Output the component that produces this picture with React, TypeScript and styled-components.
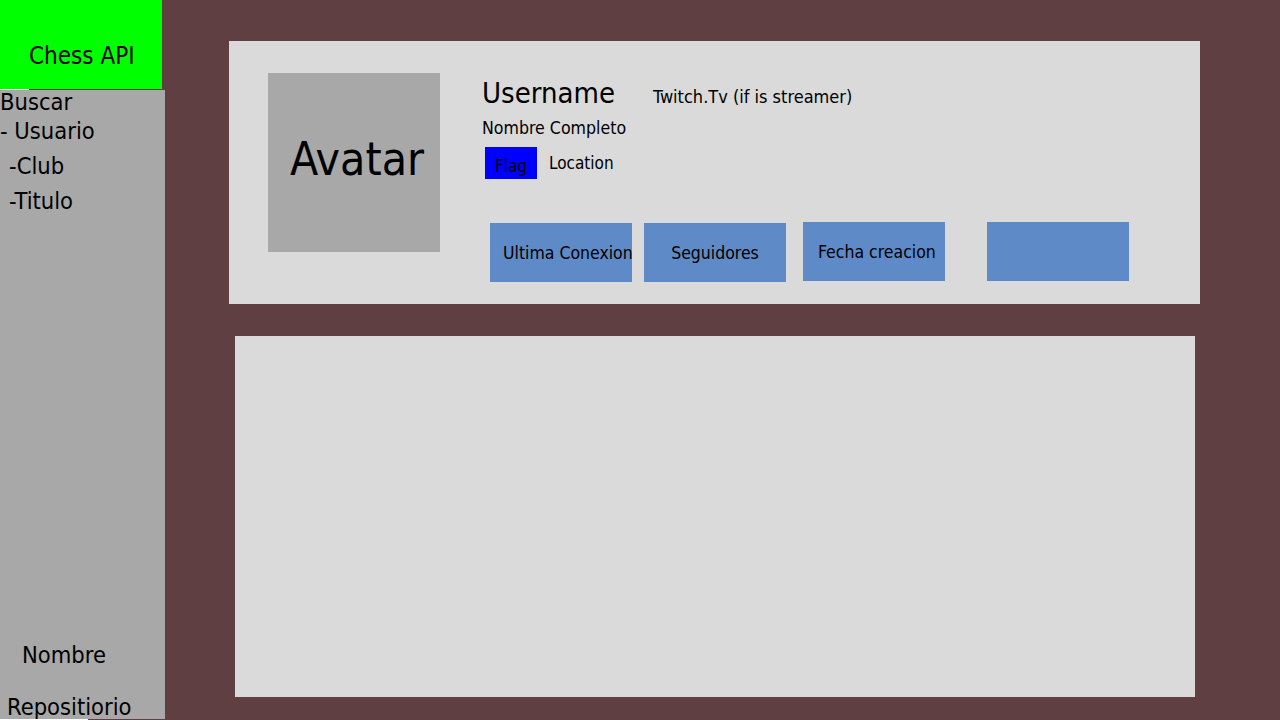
import React from 'react';
import styled, { createGlobalStyle } from 'styled-components';

const GlobalStyle = createGlobalStyle`
  html, body {
    margin: 0;
    padding: 0;
    background: #5f3f42;
    font-family: "DejaVu Sans Condensed", "DejaVu Sans", sans-serif;
    color: #000;
  }
  #root {
    height: 720px;
    overflow: hidden;
  }
`;

const Page = styled.div`
  display: flex;
  height: 720px;
  width: 1280px;
  background: #5f3f42;
`;

const Side = styled.aside`
  display: flex;
  flex-direction: column;
  width: 165px;
  flex-shrink: 0;
`;

const Brand = styled.div`
  width: 162px;
  height: 89px;
  background: #00ff00;
  font-size: 24px;
  line-height: 24px;
  padding: 44px 0 0 29px;
  box-sizing: border-box;
  white-space: nowrap;
`;

const Seam = styled.div<{ $width: number }>`
  height: 1px;
  width: ${(p) => p.$width}px;
  background: #ffffff;
  flex-shrink: 0;
`;

const SideNav = styled.nav`
  flex: 1;
  display: flex;
  flex-direction: column;
  background: #a8a8a8;
  font-size: 23.5px;
  overflow: hidden;
`;

const NavItem = styled.div<{ $indent?: number; $top?: number }>`
  padding-left: ${(p) => p.$indent ?? 0}px;
  margin-top: ${(p) => p.$top ?? 0}px;
  line-height: 24px;
  white-space: nowrap;
  flex-shrink: 0;
`;

const Spacer = styled.div`
  flex: 1;
`;

const Main = styled.main`
  flex: 1;
  display: flex;
  flex-direction: column;
`;

const ProfileCard = styled.section`
  margin: 41px 0 0 64px;
  width: 971px;
  height: 263px;
  box-sizing: border-box;
  background: #dadada;
  padding: 32px 0 0 39px;
  display: flex;
  gap: 42px;
`;

const Avatar = styled.div`
  width: 172px;
  height: 179px;
  background: #a8a8a8;
  display: flex;
  align-items: center;
  justify-content: center;
  font-size: 46px;
  padding: 0 0 8px 6px;
  box-sizing: border-box;
`;

const Info = styled.div`
  display: flex;
  flex-direction: column;
`;

const NameRow = styled.div`
  display: flex;
  align-items: baseline;
  gap: 38px;
  margin-top: 2px;
`;

const Username = styled.h1`
  margin: 0;
  font-weight: normal;
  font-size: 29px;
  line-height: 36px;
`;

const Twitch = styled.span`
  font-size: 18px;
`;

const Line = styled.div`
  font-size: 17.6px;
  line-height: 24px;
  margin-top: 5px;
`;

const LocationRow = styled.div`
  display: flex;
  align-items: center;
  gap: 12px;
  margin: 7px 0 0 3px;
  font-size: 17px;
`;

const Flag = styled.div`
  width: 52px;
  height: 32px;
  background: #0000ff;
  display: flex;
  align-items: flex-end;
  justify-content: center;
  padding-bottom: 3px;
  box-sizing: border-box;
`;

const Stats = styled.div`
  display: flex;
  align-items: flex-start;
  margin: 44px 0 0 8px;
`;

const Stat = styled.div<{ $gap: number; $up?: boolean; $pad?: number }>`
  width: 142px;
  height: 59px;
  margin-left: ${(p) => p.$gap}px;
  margin-top: ${(p) => (p.$up ? -1 : 0)}px;
  background: #5e8ac7;
  display: flex;
  align-items: center;
  justify-content: ${(p) => (p.$pad !== undefined ? 'flex-start' : 'center')};
  padding-left: ${(p) => p.$pad ?? 0}px;
  box-sizing: border-box;
  font-size: 17.5px;
  white-space: nowrap;
  overflow: hidden;
`;

const ContentCard = styled.section`
  margin: 32px 0 0 70px;
  width: 960px;
  height: 361px;
  background: #dadada;
`;

export default function App() {
  return (
    <>
      <GlobalStyle />
      <Page>
        <Side>
          <Brand>Chess API</Brand>
          <Seam $width={29} />
          <SideNav>
            <NavItem $top={0}>Buscar</NavItem>
            <NavItem $top={5}>- Usuario</NavItem>
            <NavItem $indent={9} $top={11}>-Club</NavItem>
            <NavItem $indent={9} $top={11}>-Titulo</NavItem>
            <Spacer />
            <NavItem $indent={22}>Nombre</NavItem>
            <NavItem $indent={7} $top={28}>Repositiorio</NavItem>
          </SideNav>
          <Seam $width={88} />
        </Side>
        <Main>
          <ProfileCard>
            <Avatar>Avatar</Avatar>
            <Info>
              <NameRow>
                <Username>Username</Username>
                <Twitch>Twitch.Tv (if is streamer)</Twitch>
              </NameRow>
              <Line>Nombre Completo</Line>
              <LocationRow>
                <Flag>Flag</Flag>
                <span>Location</span>
              </LocationRow>
              <Stats>
                <Stat $gap={0} $pad={13}>Ultima Conexion</Stat>
                <Stat $gap={12}>Seguidores</Stat>
                <Stat $gap={17} $up $pad={15}>Fecha creacion</Stat>
                <Stat $gap={42} $up />
              </Stats>
            </Info>
          </ProfileCard>
          <ContentCard />
        </Main>
      </Page>
    </>
  );
}
